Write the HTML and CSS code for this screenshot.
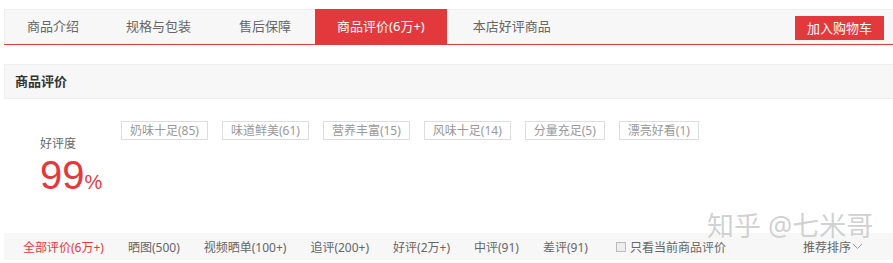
FILE: index.html
```html
<!DOCTYPE html>
<html lang="zh-CN">
<head>
<meta charset="utf-8">
<title>商品评价</title>
<link rel="stylesheet" href="styles.css">
</head>
<body>
<div class="page">
  <div class="tabbar">
    <div class="tab first">商品介绍</div>
    <div class="tab">规格与包装</div>
    <div class="tab">售后保障</div>
    <div class="tab active">商品评价(6万+)</div>
    <div class="tab">本店好评商品</div>
    <div class="cart-btn">加入购物车</div>
  </div>

  <div class="section-head">商品评价</div>

  <div class="rating">
    <div class="rate-left">
      <div class="rate-label">好评度</div>
      <div class="rate-num">99<span class="pct">%</span></div>
    </div>
    <div class="tags">
      <span class="tag">奶味十足(85)</span>
      <span class="tag">味道鲜美(61)</span>
      <span class="tag">营养丰富(15)</span>
      <span class="tag">风味十足(14)</span>
      <span class="tag">分量充足(5)</span>
      <span class="tag">漂亮好看(1)</span>
    </div>
  </div>

  <div class="filter">
    <span class="f-item on">全部评价(6万+)</span>
    <span class="f-item">晒图(500)</span>
    <span class="f-item">视频晒单(100+)</span>
    <span class="f-item">追评(200+)</span>
    <span class="f-item">好评(2万+)</span>
    <span class="f-item">中评(91)</span>
    <span class="f-item">差评(91)</span>
    <span class="f-check"><span class="box"></span>只看当前商品评价</span>
    <span class="sort">推荐排序<svg class="chev" width="11" height="7" viewBox="0 0 11 7"><polyline points="1,1 5.5,5.5 10,1" fill="none" stroke="#999" stroke-width="1"/></svg></span>
  </div>

  <div class="watermark">知乎 @七米哥</div>
</div>
</body>
</html>
```

FILE: styles.css
```css
html, body {
  margin: 0;
  padding: 0;
  background: #fff;
  overflow: hidden;
}
body {
  font-family: "Noto Sans", "Noto Sans CJK SC", sans-serif;
  color: #666;
  font-size: 12px;
}
.page {
  position: relative;
  width: 892px;
  margin-left: 4px;
  padding-top: 9px;
}
.tabbar {
  display: flex;
  height: 35px;
  background: #f7f7f7;
  border-bottom: 1px solid #e4393c;
  box-shadow: inset 0 1px 0 #eee, inset 1px 0 0 #eee;
}
.tab {
  padding: 0 24px;
  line-height: 35px;
  font-size: 13px;
  color: #666;
  white-space: nowrap;
}
.tab.first {
  padding-left: 23px;
  padding-right: 23px;
}
.tab.active {
  padding: 0 22px;
  background: #e4393c;
  color: #fff;
}
.tab.active + .tab {
  padding-left: 26px;
}
.cart-btn {
  margin-left: auto;
  margin-right: 12px;
  margin-top: 7px;
  align-self: flex-start;
  width: 89px;
  height: 24px;
  line-height: 24px;
  text-align: center;
  background: #e4393c;
  color: #fff;
  font-size: 13px;
}
.section-head {
  margin-top: 19px;
  height: 33px;
  line-height: 33px;
  border: 1px solid #eee;
  background: #f7f7f7;
  padding-left: 10px;
  font-size: 13px;
  font-weight: bold;
  color: #333;
}
.rating {
  display: flex;
}
.rate-left {
  width: 81px;
  padding: 36px 0 31px 36px;
}
.rate-label {
  line-height: 18px;
  font-size: 12px;
  color: #666;
}
.rate-num {
  margin-top: 2px;
  font-family: "Liberation Sans", Arial, sans-serif;
  font-size: 40px;
  line-height: 40px;
  color: #e4393c;
  white-space: nowrap;
}
.pct {
  font-size: 20px;
}
.tags {
  display: flex;
  align-items: flex-start;
  padding-top: 22px;
}
.tag {
  display: block;
  margin-right: 14px;
  padding: 0 8px;
  height: 17px;
  line-height: 17px;
  border: 1px solid #ddd;
  font-size: 12px;
  color: #999;
  white-space: nowrap;
}
.filter {
  display: flex;
  align-items: center;
  height: 27px;
  background: #f7f7f7;
  padding-left: 7px;
  font-size: 12px;
}
.f-item {
  padding: 0 12px;
  color: #666;
  white-space: nowrap;
}
.f-item.on {
  color: #e4393c;
}
.f-check {
  display: flex;
  align-items: center;
  margin-left: 16px;
  color: #666;
  white-space: nowrap;
}
.box {
  width: 8px;
  height: 8px;
  border: 1px solid #bbb;
  background: #eee;
  margin-right: 4px;
}
.sort {
  display: flex;
  align-items: center;
  margin-left: auto;
  margin-right: 33px;
  color: #666;
  white-space: nowrap;
}
.chev {
  margin-left: 1px;
}
.watermark {
  position: absolute;
  left: 703px;
  top: 211px;
  font-size: 27px;
  line-height: 30px;
  color: rgba(150, 150, 150, 0.45);
  text-shadow: 0 0 1px rgba(255, 255, 255, 0.9);
  white-space: nowrap;
  pointer-events: none;
}
```
